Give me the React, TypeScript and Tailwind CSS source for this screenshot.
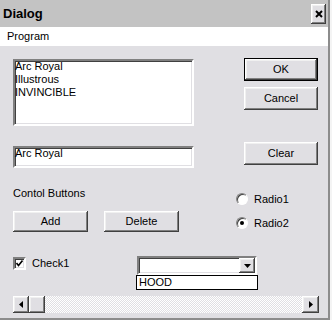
import React from "react";

const raised =
  "bg-[#e0dfe3] shadow-[inset_-1px_-1px_0_#404040,inset_1px_1px_0_#ffffff,inset_-2px_-2px_0_#808080,inset_2px_2px_0_#f0f0f0]";
const sunken =
  "bg-white border-2 border-t-[#808080] border-l-[#808080] border-b-white border-r-white shadow-[inset_1px_1px_0_#404040,inset_-1px_-1px_0_#e0dfe3]";

function Btn({ label, className }: { label: string; className?: string }) {
  return (
    <div className={`${raised} flex items-center justify-center ${className ?? ""}`}>
      {label}
    </div>
  );
}

function Radio({ label, checked }: { label: string; checked?: boolean }) {
  return (
    <div className="flex items-center h-[12px]">
      <div className="w-[12px] h-[12px] rounded-full bg-white border border-t-[#808080] border-l-[#808080] border-b-white border-r-white shadow-[inset_1px_1px_0_#404040] flex items-center justify-center">
        {checked && <div className="w-[4px] h-[4px] rounded-full bg-black" />}
      </div>
      <span className="ml-[6px]">{label}</span>
    </div>
  );
}

export default function App() {
  return (
    <div className="w-[332px] h-[320px] flex font-['Liberation_Sans',sans-serif] text-[11px] leading-[13px] text-black bg-[#e0dfe3]">
      <div className="w-[328px] flex flex-col">
        <div className="w-[328px] h-[318px] flex flex-col">
          {/* title bar */}
          <div className="h-[27px] bg-[#c3c3c3] flex items-center pl-[3px] pr-[2px]">
            <span className="font-bold text-[13px]">Dialog</span>
            <div className={`${raised} ml-auto w-[15px] h-[20px] flex items-center justify-center`}>
              <svg width="8" height="8" viewBox="0 0 8 8">
                <path d="M1 1L7 7M7 1L1 7" stroke="#000" strokeWidth="2" />
              </svg>
            </div>
          </div>
          {/* menu */}
          <div className="h-[19px] bg-white pl-[7px] flex items-center">Program</div>

          {/* body */}
          <div className="flex-1 pl-[13px] pt-[13px]">
            <div className="flex">
              <div className="w-[181px]">
                <div className={`${sunken} h-[67px]`}>
                  <div className="-mt-[1px]">
                    <div>Arc Royal</div>
                    <div>Illustrous</div>
                    <div>INVINCIBLE</div>
                  </div>
                </div>
                <div className={`${sunken} h-[22px] mt-[20px]`}>
                  <div className="-mt-[1px]">Arc Royal</div>
                </div>
              </div>
              <div className="ml-[50px] w-[74px] flex flex-col">
                <div className="-mt-[1px] h-[23px] border border-black">
                  <Btn label="OK" className="h-full" />
                </div>
                <Btn label="Cancel" className="mt-[6px] h-[23px]" />
                <Btn label="Clear" className="mt-[32px] h-[23px]" />
              </div>
            </div>

            <div className="flex">
              <div className="w-[223px]">
                <div className="mt-[19px]">Contol Buttons</div>
                <div className="flex gap-[16px] mt-[11px]">
                  <Btn label="Add" className="w-[75px] h-[21px]" />
                  <Btn label="Delete" className="w-[75px] h-[21px]" />
                </div>
              </div>
              <div className="mt-[25px] flex flex-col gap-[12px]">
                <Radio label="Radio1" />
                <Radio label="Radio2" checked />
              </div>
            </div>

            <div className="flex mt-[25px]">
              <div className="w-[124px] flex items-center h-[13px]">
                <div className={`${sunken} w-[13px] h-[13px] flex items-center justify-center`}>
                  <svg width="7" height="7" viewBox="0 0 7 7">
                    <path d="M0.5 3L2.5 5.5L6.5 0.5" stroke="#000" strokeWidth="1.6" fill="none" />
                  </svg>
                </div>
                <span className="ml-[6px]">Check1</span>
              </div>
              <div className="relative -mt-[1px]">
                <div className={`${sunken} w-[120px] h-[19px] flex justify-end`}>
                  <div className={`${raised} w-[16px] h-[15px] flex items-center justify-center`}>
                    <svg width="7" height="4" viewBox="0 0 7 4">
                      <path d="M0 0H7L3.5 4Z" fill="#000" />
                    </svg>
                  </div>
                </div>
                <div className="absolute left-[-1px] top-full w-[122px] h-[15px] bg-white border border-black pl-[2px]">
                  HOOD
                </div>
              </div>
            </div>

            <div className="mt-[21px] w-[306px] h-[17px] flex bg-[repeating-conic-gradient(#ffffff_0%_25%,#e0dfe3_0%_50%)] bg-[length:2px_2px]">
              <div className={`${raised} w-[16px] h-full flex items-center justify-center`}>
                <svg width="4" height="7" viewBox="0 0 4 7">
                  <path d="M4 0V7L0 3.5Z" fill="#000" />
                </svg>
              </div>
              <div className={`${raised} w-[16px] h-full`} />
              <div className="flex-1" />
              <div className={`${raised} w-[17px] h-full flex items-center justify-center`}>
                <svg width="4" height="7" viewBox="0 0 4 7">
                  <path d="M0 0V7L4 3.5Z" fill="#000" />
                </svg>
              </div>
            </div>
          </div>
        </div>
        <div className="h-[2px] bg-[#8c8c8c]" />
      </div>
      <div className="w-[2px] h-[320px] bg-[#8c8c8c]" />
      <div className="w-[2px] h-[320px] bg-[#f4f4f4]" />
    </div>
  );
}
